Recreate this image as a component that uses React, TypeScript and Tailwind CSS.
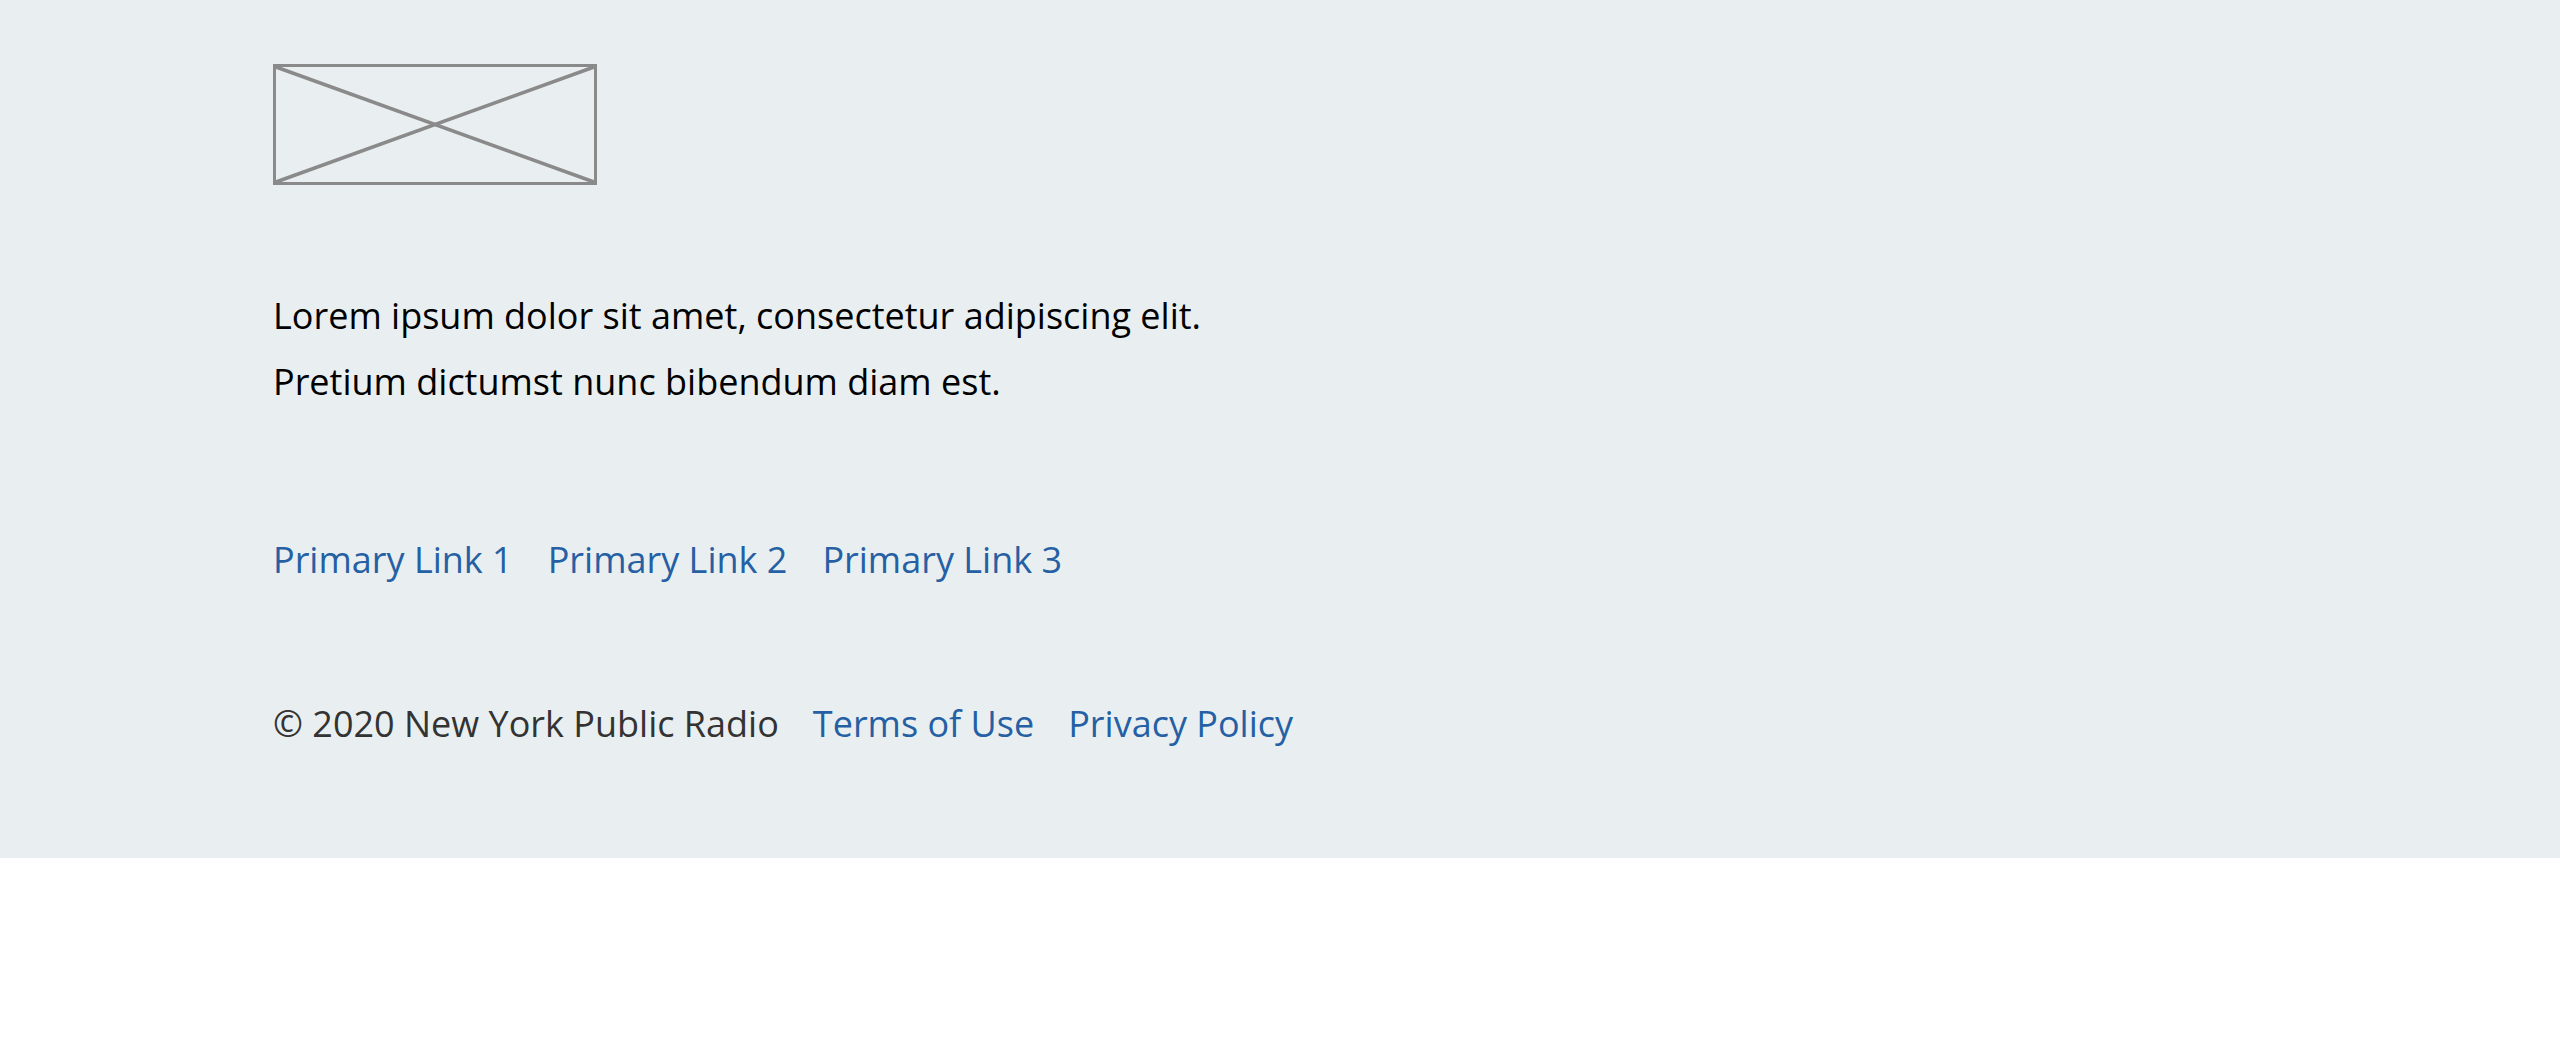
export default function App() {
  return (
    <div className="w-full bg-white" style={{ minHeight: 1048 }}>
      <footer
        className="bg-[#e9eff0] pl-[273px] pt-[64px] pb-[101px]"
        style={{ fontFamily: '"Open Sans", "Liberation Sans", sans-serif' }}
      >
        {/* Logo placeholder */}
        <div className="w-[324px] h-[121px]">
          <svg width="324" height="121" viewBox="0 0 324 121" className="block">
            <rect x="1.5" y="1.5" width="321" height="118" fill="none" stroke="#8a8a8a" strokeWidth="3" />
            <line x1="3" y1="3" x2="321" y2="118" stroke="#8a8a8a" strokeWidth="3.5" />
            <line x1="321" y1="3" x2="3" y2="118" stroke="#8a8a8a" strokeWidth="3.5" />
          </svg>
        </div>

        <p className="mt-[98px] text-[36px] leading-[66px] text-black">
          Lorem ipsum dolor sit amet, consectetur adipiscing elit.
          <br />
          Pretium dictumst nunc bibendum diam est.
        </p>

        <nav className="mt-[112px] flex gap-[35px] text-[36px] leading-[66px]">
          <a href="#" className="text-[#2660a4]">Primary Link 1</a>
          <a href="#" className="text-[#2660a4]">Primary Link 2</a>
          <a href="#" className="text-[#2660a4]">Primary Link 3</a>
        </nav>

        <div className="mt-[98px] flex gap-[34px] text-[36px] leading-[66px]">
          <span className="text-[#333333]">© 2020 New York Public Radio</span>
          <a href="#" className="text-[#2660a4]">Terms of Use</a>
          <a href="#" className="text-[#2660a4]">Privacy Policy</a>
        </div>
      </footer>
    </div>
  )
}
